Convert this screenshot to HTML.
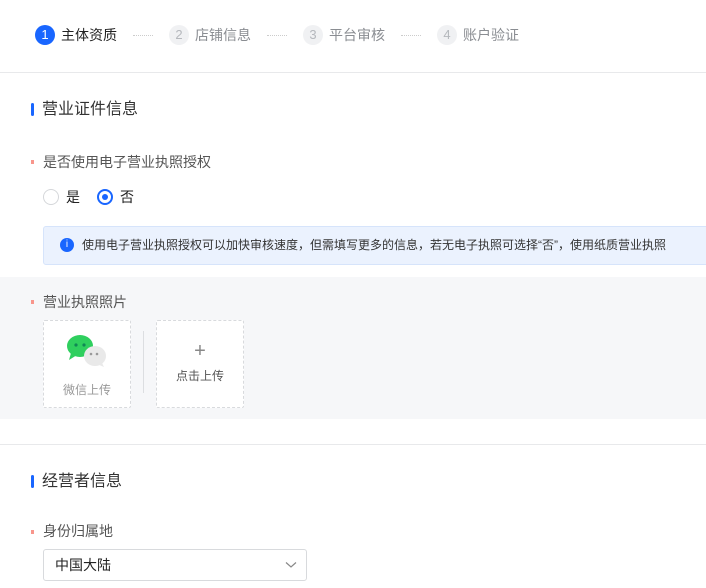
<!DOCTYPE html><html><head><meta charset="utf-8"><style>
body{margin:0;width:706px;height:588px;overflow:hidden;background:#fff;font-family:"Liberation Sans","Noto Sans CJK SC",sans-serif;position:relative}
.a{position:absolute}
.t{font-size:14px;line-height:20px}
.num{width:20px;height:20px;border-radius:50%;background:#f0f1f3;color:#b5b8bd;font-size:13px;line-height:20px;text-align:center}
.dots{width:20px;border-top:1px dotted #ccc;height:0}
.bar{width:3px;height:13px;background:#1966ff;border-radius:2px}
.req{width:3px;height:4px;background:#f8968c}
.box{width:86px;height:86px;border:1px dashed #d8dadd;border-radius:2px;background:#fff}
</style></head><body>
<div class="a num" style="left:35px;top:25px;background:#1966ff;color:#fff">1</div>
<div class="a t" style="left:61px;top:25px;color:#222">主体资质</div>
<div class="a dots" style="left:133px;top:35px"></div>
<div class="a num" style="left:169px;top:25px">2</div>
<div class="a t" style="left:195px;top:25px;color:#8a8d92">店铺信息</div>
<div class="a dots" style="left:267px;top:35px"></div>
<div class="a num" style="left:303px;top:25px">3</div>
<div class="a t" style="left:329px;top:25px;color:#8a8d92">平台审核</div>
<div class="a dots" style="left:401px;top:35px"></div>
<div class="a num" style="left:437px;top:25px">4</div>
<div class="a t" style="left:463px;top:25px;color:#8a8d92">账户验证</div>
<div class="a" style="left:0;top:72px;width:706px;height:1px;background:#e8e9eb"></div>

<div class="a bar" style="left:31px;top:103px"></div>
<div class="a" style="left:42px;top:99px;font-size:16px;line-height:22px;color:#333">营业证件信息</div>
<div class="a req" style="left:31px;top:160px"></div>
<div class="a t" style="left:43px;top:152px;color:#555">是否使用电子营业执照授权</div>
<div class="a" style="left:43px;top:189px;width:14px;height:14px;border:1px solid #d5d7da;border-radius:50%"></div>
<div class="a t" style="left:66px;top:187px;color:#222">是</div>
<div class="a" style="left:97px;top:189px;width:12px;height:12px;border:2px solid #1966ff;border-radius:50%"></div>
<div class="a" style="left:102px;top:194px;width:6px;height:6px;background:#1966ff;border-radius:50%"></div>
<div class="a t" style="left:120px;top:187px;color:#222">否</div>
<div class="a" style="left:43px;top:226px;width:680px;height:37px;background:#ebf2fe;border:1px solid #d6e4fb;border-radius:3px"></div>
<div class="a" style="left:60px;top:238px;width:14px;height:14px;border-radius:50%;background:#1966ff;color:#fff;font-size:10px;line-height:14px;text-align:center">i</div>
<div class="a" style="left:82px;top:236px;font-size:12px;line-height:18px;color:#333;white-space:nowrap">使用电子营业执照授权可以加快审核速度，但需填写更多的信息，若无电子执照可选择“否”，使用纸质营业执照</div>

<div class="a" style="left:0;top:277px;width:706px;height:142px;background:#f6f7f9"></div>
<div class="a req" style="left:31px;top:300px"></div>
<div class="a t" style="left:43px;top:292px;color:#555">营业执照照片</div>
<div class="a box" style="left:43px;top:320px"></div>
<svg class="a" style="left:66px;top:334px" width="42" height="34" viewBox="0 0 42 34">
<ellipse cx="14" cy="12" rx="13" ry="11" fill="#2fcf5e"/><path d="M5 19 L3 26 L11 21Z" fill="#2fcf5e"/>
<circle cx="10" cy="11" r="1.6" fill="#185"/><circle cx="18" cy="11" r="1.6" fill="#185"/>
<ellipse cx="29" cy="22" rx="11" ry="10" fill="#e9e9e9"/><path d="M36 29 L38 33 L31 30Z" fill="#e9e9e9"/>
<circle cx="25" cy="20" r="1.3" fill="#999"/><circle cx="31" cy="20" r="1.3" fill="#999"/></svg>
<div class="a" style="left:43px;top:381px;width:88px;text-align:center;font-size:12px;line-height:18px;color:#999">微信上传</div>
<div class="a" style="left:143px;top:331px;width:1px;height:62px;background:#dcdee1"></div>
<div class="a box" style="left:156px;top:320px"></div>
<div class="a" style="left:156px;top:339px;width:88px;text-align:center;font-size:20px;line-height:24px;color:#888;font-weight:300">+</div>
<div class="a" style="left:156px;top:367px;width:88px;text-align:center;font-size:12px;line-height:18px;color:#555">点击上传</div>

<div class="a" style="left:0;top:444px;width:706px;height:1px;background:#e8e9eb"></div>
<div class="a bar" style="left:31px;top:475px"></div>
<div class="a" style="left:42px;top:471px;font-size:16px;line-height:22px;color:#333">经营者信息</div>
<div class="a req" style="left:31px;top:530px"></div>
<div class="a t" style="left:43px;top:521px;color:#555">身份归属地</div>
<div class="a" style="left:43px;top:549px;width:262px;height:30px;border:1px solid #d8dadd;border-radius:3px"></div>
<div class="a t" style="left:55px;top:555px;color:#222">中国大陆</div>
<svg class="a" style="left:285px;top:561px" width="12" height="8" viewBox="0 0 12 8"><path d="M1 1.5 L6 6 L11 1.5" fill="none" stroke="#888" stroke-width="1.2"/></svg>
</body></html>
